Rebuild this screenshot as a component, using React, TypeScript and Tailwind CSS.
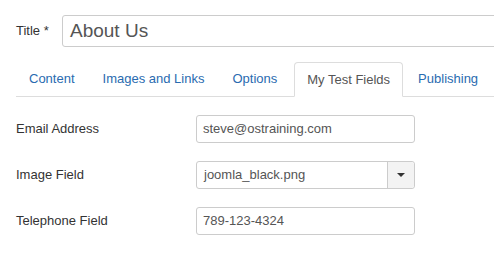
import React from "react";

const font = { fontFamily: '"Liberation Sans", Arial, sans-serif' };

export default function App() {
  const tabs = ["Content", "Images and Links", "Options", "My Test Fields", "Publishing"];
  return (
    <div className="w-[494px] h-[253px] bg-white overflow-hidden pl-4" style={font}>
      <div className="flex items-center pt-[15px] h-[47px]">
        <div className="w-[46px] text-[13px] text-[#333] shrink-0">Title *</div>
        <div className="h-[32px] w-[460px] shrink-0 border border-[#ccc] rounded-[3px] flex items-center pl-[7px] text-[19px] text-[#555]">
          About Us
        </div>
      </div>
      <div className="mt-[15px] flex border-b border-[#ddd] h-[35px] items-end w-[600px]">
        {tabs.map((t) => {
          const active = t === "My Test Fields";
          const extra = t === "Options" ? " pr-[14px]" : " pr-[12px]";
          return (
            <div
              key={t}
              className={
                active
                  ? "shrink-0 whitespace-nowrap h-[35px] mb-[-1px] pl-[12px] pr-[12px] mr-[2px] flex items-center text-[13px] text-[#555] bg-white border border-[#ddd] border-b-white rounded-t-[4px]"
                  : "shrink-0 whitespace-nowrap h-[34px] pl-[12px] mr-[2px] flex items-center text-[13px] text-[#2a6bb0] border border-transparent" + extra
              }
            >
              {t}
            </div>
          );
        })}
      </div>
      <div className="flex flex-col gap-[18px] mt-[18px]">
        <div className="flex items-center">
          <div className="w-[180px] text-[13px] text-[#333]">Email Address</div>
          <div className="w-[219px] h-[28px] border border-[#ccc] rounded-[3px] flex items-center pl-[6px] text-[13px] text-[#555]">
            steve@ostraining.com
          </div>
        </div>
        <div className="flex items-center">
          <div className="w-[180px] text-[13px] text-[#333]">Image Field</div>
          <div className="w-[219px] h-[28px] border border-[#ccc] rounded-[3px] flex items-stretch text-[13px] text-[#555]">
            <div className="flex-1 flex items-center pl-[7px]">joomla_black.png</div>
            <div className="w-[27px] border-l border-[#ccc] bg-[#f3f3f3] rounded-r-[3px] flex items-center justify-center">
              <div className="w-0 h-0 border-l-[4px] border-r-[4px] border-t-[4px] border-l-transparent border-r-transparent border-t-[#333]" />
            </div>
          </div>
        </div>
        <div className="flex items-center">
          <div className="w-[180px] text-[13px] text-[#333]">Telephone Field</div>
          <div className="w-[219px] h-[28px] border border-[#ccc] rounded-[3px] flex items-center pl-[6px] text-[13px] text-[#555]">
            789-123-4324
          </div>
        </div>
      </div>
    </div>
  );
}
